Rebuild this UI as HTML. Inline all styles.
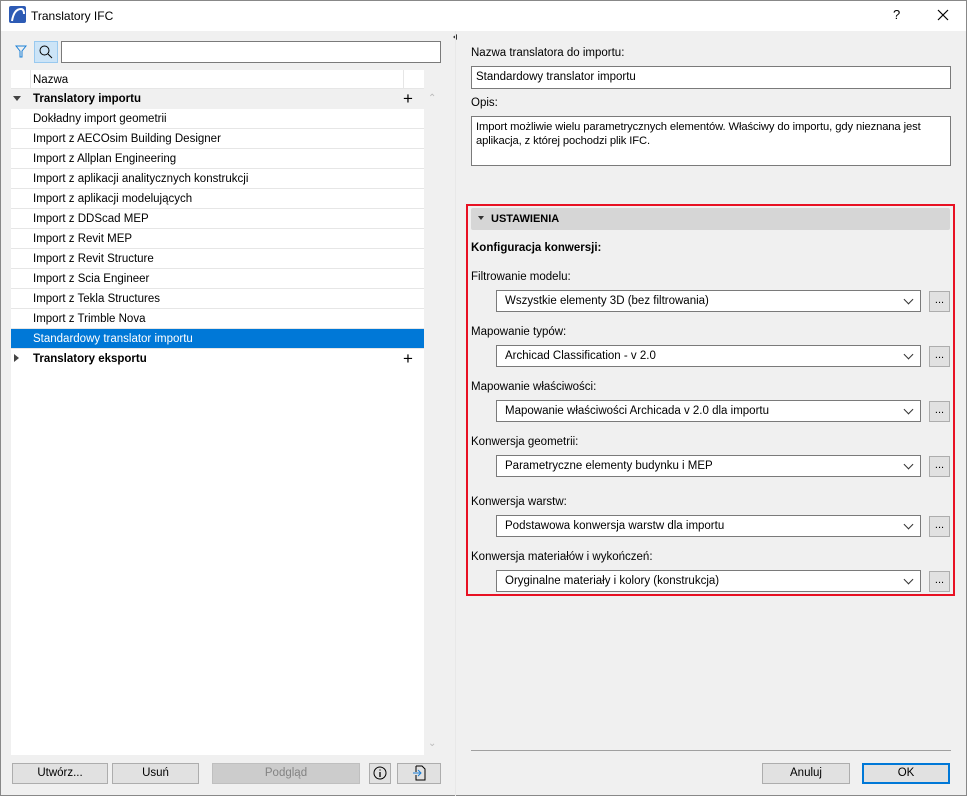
<!DOCTYPE html>
<html><head><meta charset="utf-8"><style>
*{box-sizing:border-box;margin:0;padding:0}
body{width:967px;height:796px;background:#f0f0f0;font-family:"Liberation Sans",sans-serif;font-size:11.5px;color:#000;position:relative;overflow:hidden}
.a{position:absolute}
.title{left:0;top:0;width:967px;height:31px;background:#fff}
.row{position:absolute;left:11px;width:413px;height:20px;line-height:20px;padding-left:22px;background:#fff;border-bottom:1px solid #e6e6e6;white-space:nowrap}
.grp{background:#f0f0f0;font-weight:bold;border-bottom:none}
.sel{background:#0078d7;color:#fff}
.inp{background:#fff;border:1px solid #7a7a7a;height:22px;line-height:20px;padding-left:5px}
.dd{position:absolute;left:496px;width:425px;height:22px;background:#fff;border:1px solid #7a7a7a;line-height:20px;padding-left:8px}
.dd:after{content:"";position:absolute;right:8px;top:5px;width:6px;height:6px;border-right:1px solid #333;border-bottom:1px solid #333;transform:rotate(45deg)}
.eb{position:absolute;left:929px;width:21px;height:21px;background:#e1e1e1;border:1px solid #adadad;text-align:center;line-height:16px;font-size:11px}
.lb{position:absolute;left:471px}
.btn{position:absolute;top:763px;height:21px;background:#e1e1e1;border:1px solid #adadad;text-align:center;line-height:19px}
</style></head><body>
<div class="a title"></div>
<div class="a" style="left:0;top:0;width:967px;height:796px;border:1px solid #888;pointer-events:none"></div>
<svg class="a" style="left:9px;top:6px" width="17" height="17"><rect width="17" height="17" rx="2" fill="#2d5bb5"/><path d="M3 15 Q5 3 12 3 Q15 3 15 8" stroke="#fff" stroke-width="2" fill="none"/></svg>
<div class="a" style="left:31px;top:9px;font-size:12px">Translatory IFC</div>
<div class="a" style="left:893px;top:7px;font-size:13px">?</div>
<svg class="a" style="left:937px;top:9px" width="12" height="12"><path d="M1 1L11 11M11 1L1 11" stroke="#000" stroke-width="1.2"/></svg>
<svg class="a" style="left:15px;top:45px" width="12" height="13"><path d="M1 1H11L7 6V12H5V6Z" stroke="#1a7fd6" fill="none"/></svg>
<div class="a" style="left:34px;top:41px;width:24px;height:22px;background:#cce4f7;border:1px solid #99c9ef"></div>
<svg class="a" style="left:38px;top:44px" width="16" height="16"><circle cx="6.5" cy="6.5" r="4.5" stroke="#000" fill="none"/><path d="M10 10L14 14" stroke="#000"/></svg>
<div class="a inp" style="left:61px;top:41px;width:380px;height:22px"></div>
<div class="a" style="left:11px;top:70px;width:413px;height:685px;background:#fff"></div>
<div class="a" style="left:11px;top:70px;width:413px;height:19px;background:#fff;border-bottom:1px solid #e6e6e6"></div>
<div class="a" style="left:30px;top:70px;height:19px;border-left:1px solid #e6e6e6"></div>
<div class="a" style="left:403px;top:70px;height:19px;border-left:1px solid #e6e6e6"></div>
<div class="a" style="left:33px;top:74px">Nazwa</div>
<div class="row grp" style="top:89px">Translatory importu</div>
<div class="a" style="left:13px;top:96px;border:4px solid transparent;border-top:5px solid #444"></div>
<div class="a" style="left:403px;top:90px;font-size:17px;line-height:17px">+</div>
<div class="row" style="top:109px">Dokładny import geometrii</div>
<div class="row" style="top:129px">Import z AECOsim Building Designer</div>
<div class="row" style="top:149px">Import z Allplan Engineering</div>
<div class="row" style="top:169px">Import z aplikacji analitycznych konstrukcji</div>
<div class="row" style="top:189px">Import z aplikacji modelujących</div>
<div class="row" style="top:209px">Import z DDScad MEP</div>
<div class="row" style="top:229px">Import z Revit MEP</div>
<div class="row" style="top:249px">Import z Revit Structure</div>
<div class="row" style="top:269px">Import z Scia Engineer</div>
<div class="row" style="top:289px">Import z Tekla Structures</div>
<div class="row" style="top:309px">Import z Trimble Nova</div>
<div class="row sel" style="top:329px">Standardowy translator importu</div>
<div class="row grp" style="top:349px;background:#fff">Translatory eksportu</div>
<div class="a" style="left:14px;top:354px;border:4px solid transparent;border-left:5px solid #444"></div>
<div class="a" style="left:403px;top:350px;font-size:17px;line-height:17px">+</div>
<div class="a" style="left:428px;top:93px;color:#bbb;font-size:10px">&#8963;</div>
<div class="a" style="left:428px;top:738px;color:#bbb;font-size:10px">&#8964;</div>
<div class="a" style="left:450px;top:34px;border:3px solid transparent;border-right:4px solid #333;width:0"></div>
<div class="a" style="left:455px;top:31px;width:1px;height:765px;background:#e8e8e8"></div>
<div class="lb" style="top:47px">Nazwa translatora do importu:</div>
<div class="a inp" style="left:471px;top:66px;width:480px;height:23px;padding-left:4px">Standardowy translator importu</div>
<div class="lb" style="top:97px">Opis:</div>
<div class="a inp" style="left:471px;top:116px;width:480px;height:50px;line-height:14px;padding:3px 24px 0 4px;font-size:11.2px;letter-spacing:-0.1px">Import możliwie wielu parametrycznych elementów. Właściwy do importu, gdy nieznana jest aplikacja, z której pochodzi plik IFC.</div>
<div class="a" style="left:466px;top:204px;width:489px;height:392px;border:2px solid #e81123"></div>
<div class="a" style="left:471px;top:208px;width:479px;height:22px;background:#d6d6d6;border-radius:2px"></div>
<div class="a" style="left:478px;top:216px;border:3px solid transparent;border-top:4px solid #333"></div>
<div class="a" style="left:491px;top:213px;font-weight:bold;font-size:11px">USTAWIENIA</div>
<div class="lb" style="top:242px;font-weight:bold">Konfiguracja konwersji:</div>
<div class="lb" style="top:271px">Filtrowanie modelu:</div>
<div class="dd" style="top:290px">Wszystkie elementy 3D (bez filtrowania)</div><div class="eb" style="top:291px">...</div>
<div class="lb" style="top:326px">Mapowanie typów:</div>
<div class="dd" style="top:345px">Archicad Classification - v 2.0</div><div class="eb" style="top:346px">...</div>
<div class="lb" style="top:381px">Mapowanie właściwości:</div>
<div class="dd" style="top:400px">Mapowanie właściwości Archicada v 2.0 dla importu</div><div class="eb" style="top:401px">...</div>
<div class="lb" style="top:436px">Konwersja geometrii:</div>
<div class="dd" style="top:455px">Parametryczne elementy budynku i MEP</div><div class="eb" style="top:456px">...</div>
<div class="lb" style="top:496px">Konwersja warstw:</div>
<div class="dd" style="top:515px">Podstawowa konwersja warstw dla importu</div><div class="eb" style="top:516px">...</div>
<div class="lb" style="top:551px">Konwersja materiałów i wykończeń:</div>
<div class="dd" style="top:570px">Oryginalne materiały i kolory (konstrukcja)</div><div class="eb" style="top:571px">...</div>
<div class="a" style="left:471px;top:750px;width:480px;height:1px;background:#a0a0a0"></div>
<div class="btn" style="left:12px;width:96px">Utwórz...</div>
<div class="btn" style="left:112px;width:87px">Usuń</div>
<div class="btn" style="left:212px;width:148px;background:#cccccc;border-color:#bfbfbf;color:#838383">Podgląd</div>
<div class="btn" style="left:369px;width:22px"><svg width="14" height="14" style="margin-top:2px"><circle cx="7" cy="7" r="6" stroke="#000" fill="none"/><path d="M7 6V11M7 3.5V4.5" stroke="#000" stroke-width="1.3"/></svg></div>
<div class="btn" style="left:397px;width:44px"><svg width="14" height="16" style="margin-top:1px"><path d="M4 1H10L13 4V15H4V10M4 7V1" stroke="#000" fill="none"/><path d="M1 8H9M6 5L9 8L6 11" stroke="#1a7fd6" fill="none"/></svg></div>
<div class="btn" style="left:762px;width:88px">Anuluj</div>
<div class="btn" style="left:862px;width:88px;border:2px solid #0078d7;line-height:17px">OK</div>
</body></html>
